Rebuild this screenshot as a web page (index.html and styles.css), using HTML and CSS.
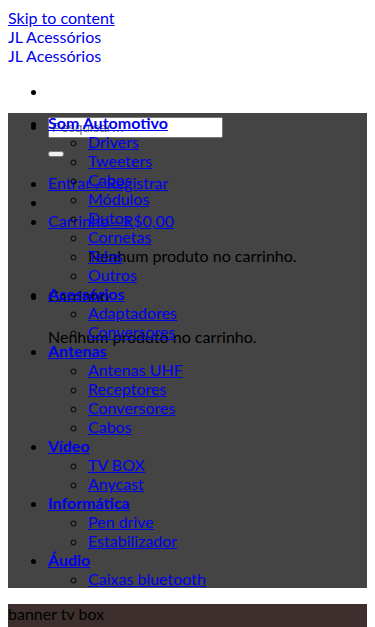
FILE: index.html
```html
<!DOCTYPE html>
<html lang="pt-BR">
  <head>
    <meta charset="utf-8">
    <title>JL Acessórios</title>
    <link rel="stylesheet" href="styles.css">
  </head>
  <body>
    <div class="skip"><a href="#content">Skip to content</a></div>
    <div class="site-branding">
      <div><a class="site-title" href="#">JL Acessórios</a></div>
      <div><a class="site-title" href="#">JL Acessórios</a></div>
    </div>
    <ul class="header-top">
      <li></li>
    </ul>

    <!-- collapsed header bar: its content spills over the nav below -->
    <div class="header-info">
      <ul class="header-links">
        <li>
          <form class="search-form">
            <div><input type="search" placeholder="Pesquisar…"></div>
            <div><button type="submit"></button></div>
          </form>
        </li>
        <li><a href="#">Entrar / Registrar</a></li>
        <li></li>
        <li>
          <a href="#">Carrinho - R$0,00</a>
          <div class="cart-dropdown">
            <p>Nenhum produto no carrinho.</p>
          </div>
        </li>
        <li class="cart-widget">
          <div class="widget-title">Carrinho</div>
          <p>Nenhum produto no carrinho.</p>
        </li>
      </ul>
    </div>

    <nav class="main-nav">
      <ul class="menu">
        <li>
          <a class="menu-top" href="#">Som Automotivo</a>
          <ul>
            <li><a href="#">Drivers</a></li>
            <li><a href="#">Tweeters</a></li>
            <li><a href="#">Cabos</a></li>
            <li><a href="#">Módulos</a></li>
            <li><a href="#">Dutos</a></li>
            <li><a href="#">Cornetas</a></li>
            <li><a href="#">Telas</a></li>
            <li><a href="#">Outros</a></li>
          </ul>
        </li>
        <li>
          <a class="menu-top" href="#">Acessórios</a>
          <ul>
            <li><a href="#">Adaptadores</a></li>
            <li><a href="#">Conversores</a></li>
          </ul>
        </li>
        <li>
          <a class="menu-top" href="#">Antenas</a>
          <ul>
            <li><a href="#">Antenas UHF</a></li>
            <li><a href="#">Receptores</a></li>
            <li><a href="#">Conversores</a></li>
            <li><a href="#">Cabos</a></li>
          </ul>
        </li>
        <li>
          <a class="menu-top" href="#">Vídeo</a>
          <ul>
            <li><a href="#">TV BOX</a></li>
            <li><a href="#">Anycast</a></li>
          </ul>
        </li>
        <li>
          <a class="menu-top" href="#">Informática</a>
          <ul>
            <li><a href="#">Pen drive</a></li>
            <li><a href="#">Estabilizador</a></li>
          </ul>
        </li>
        <li>
          <a class="menu-top" href="#">Áudio</a>
          <ul>
            <li><a href="#">Caixas bluetooth</a></li>
          </ul>
        </li>
      </ul>
    </nav>

    <div class="banner" id="content">banner tv box</div>
  </body>
</html>
```

FILE: styles.css
```css
body {
  margin: 8px;
  font-family: Lato, "Liberation Sans", sans-serif;
  font-size: 16px;
  color: #000;
}
a {
  color: #0000ee;
}
.site-title {
  text-decoration: none;
}

.header-top {
  margin: 16px 0 13px;
  padding-left: 40px;
}

.header-info {
  height: 0;
}
.header-links {
  margin: 0;
  padding: 3px 0 0 40px;
}
.search-form {
  margin: 0 0 16px;
}
.search-form input {
  box-sizing: border-box;
  width: 175px;
  height: 21px;
  font: 13.33px "Liberation Sans", sans-serif;
}
.cart-dropdown {
  padding-left: 40px;
}
.cart-dropdown p {
  margin: 16px 0;
}
.cart-widget {
  margin-top: 21px;
}
.cart-widget p {
  margin: 22px 0 0;
}

.main-nav {
  background-color: #444444;
}
.menu {
  margin: 0;
  padding-left: 40px;
}
.menu-top {
  font-weight: bold;
}

.banner {
  margin-top: 16px;
  height: 160px;
  background-color: #3c2f2d;
}
```
